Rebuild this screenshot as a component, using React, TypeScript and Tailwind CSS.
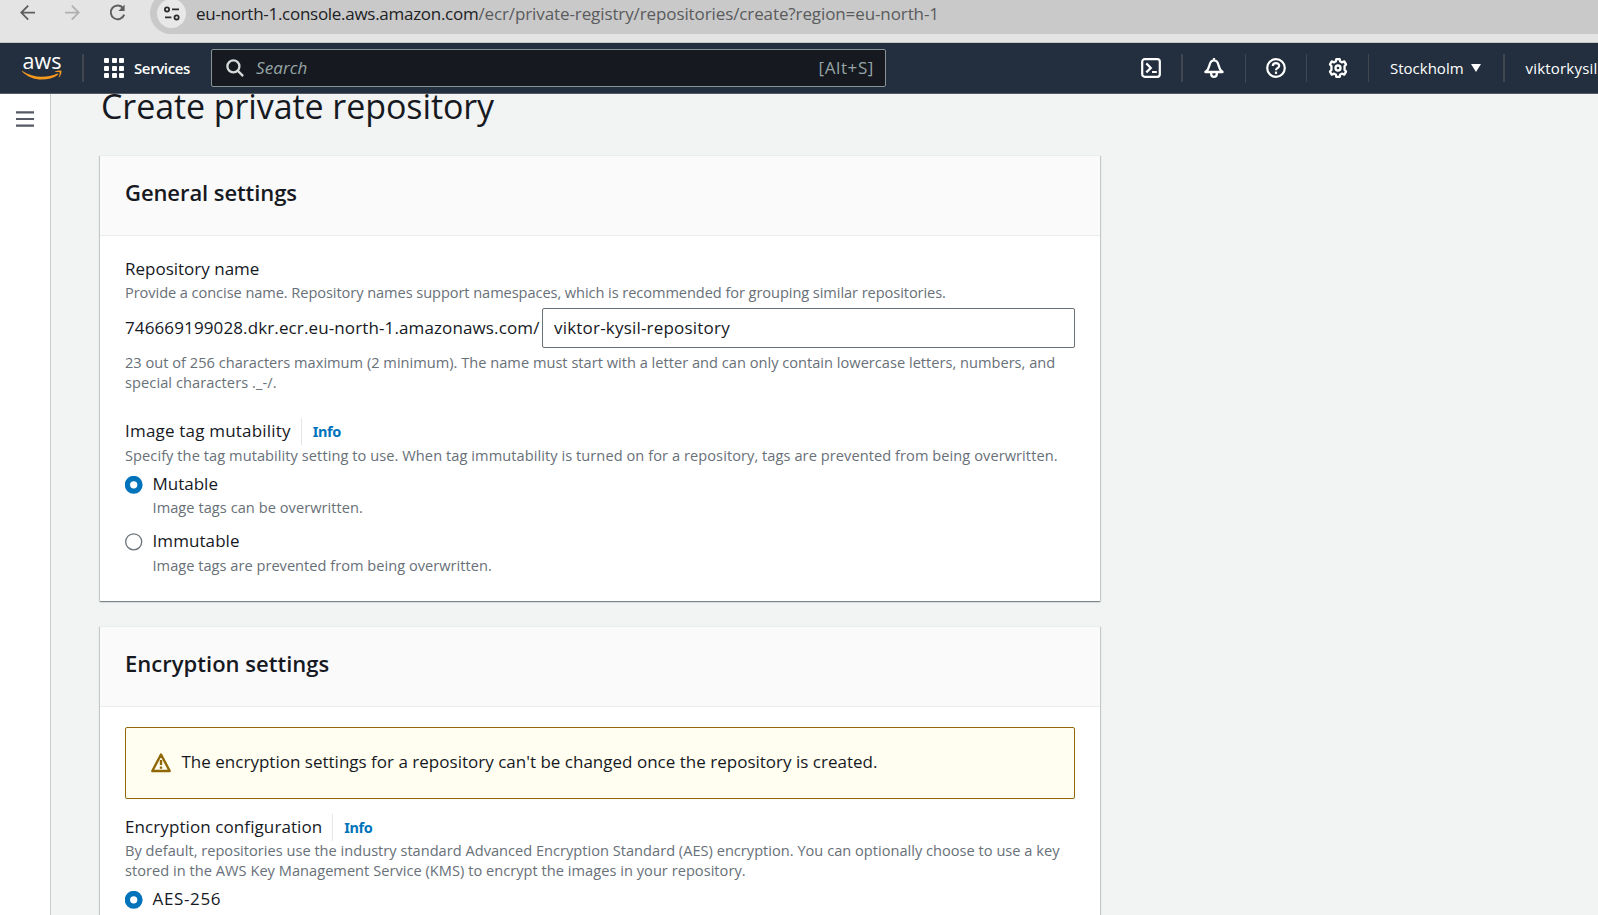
import React from 'react';

const label = 'whitespace-nowrap text-[17px] leading-[26px] text-[#16191f]';
const hint = 'whitespace-nowrap text-[14.6px] leading-[20px] text-[#687078]';

function BrowserBar() {
  return (
    <div className="flex h-[43px] shrink-0 items-start border-b border-[#c3c7c9] bg-[#e4e4e4]">
      <svg className="ml-[20px] mt-[4px] h-[17px] w-[15px]" viewBox="0 0 15 17" fill="none" stroke="#5c5e60" strokeWidth="1.8">
        <path d="M15 8.7H1.6M8.2 1.6 1.3 8.6l6.9 7" />
      </svg>
      <svg className="ml-[30px] mt-[4px] h-[17px] w-[15px]" viewBox="0 0 15 17" fill="none" stroke="#b0b0b0" strokeWidth="1.8">
        <path d="M0 8.7h13.4M6.8 1.6l6.9 7-6.9 7" />
      </svg>
      <svg className="ml-[29px] mt-[4px] h-[17px] w-[18px]" viewBox="0 0 18 17" fill="none" stroke="#5c5e60" strokeWidth="1.9">
        <path d="M14.2 4.2A6.9 6.9 0 1 0 15.2 10.6" />
        <path d="M15.6 0.6v6.4h-6.2z" fill="#5c5e60" stroke="none" />
      </svg>
      <div className="-mt-[8px] ml-[23px] flex h-[42px] flex-1 items-center rounded-l-full bg-[#c9c9c9] pl-[7px]">
        <div className="flex size-[29px] shrink-0 items-center justify-center rounded-full bg-[#e8e8e8]">
          <svg className="h-[15px] w-[16px]" viewBox="0 0 16 15" fill="none" stroke="#2b2d2f" strokeWidth="1.8">
            <circle cx="3" cy="3.4" r="2.1" />
            <path d="M8 3.4h7M1 11.4h6.4" />
            <circle cx="12.6" cy="11.4" r="2.1" />
          </svg>
        </div>
        <div className="ml-[10px] mt-px flex whitespace-nowrap text-[17px] leading-[24px]">
          <span className="tracking-[-0.28px] text-[#202124]">eu-north-1.console.aws.amazon.com</span>
          <span className="tracking-[-0.105px] text-[#5a5b5d]">/ecr/private-registry/repositories/create?region=eu-north-1</span>
        </div>
      </div>
    </div>
  );
}

function AwsLogo() {
  return (
    <div className="flex h-[30px] w-[40px] shrink-0 flex-col items-center">
      <span className="text-[21.5px] font-normal leading-[16px] tracking-[0.1px] text-white">aws</span>
      <svg className="mt-[1px] h-[10px] w-[40px] shrink-0" viewBox="0 0 40 10">
        <path d="M0.3 0.9C6 4.6 13 6.8 20 6.8c5 0 10.600-1.100 15.300-3.200.8-.3 1.300.5.7 1.100C31.800 8 25.500 9.600 19.800 9.600 12.200 9.600 5.400 6.600.2 1.700c-.4-.5-.2-1 .1-.8z" fill="#f7981f" />
        <path d="M33 1.500c2.200-1.200 5.500-1.400 6.300-.7.700.8-.2 4.600-2.100 6.500-.3.300-.6.100-.5-.2.500-1.200 1.400-3.700 1-4.500-.500-.7-3.100-.6-4.400-.5-.4 0-.6-.3-.3-.6z" fill="#f7981f" />
      </svg>
    </div>
  );
}

const iconClass = 'size-[20px] shrink-0';

function TopNav() {
  return (
    <div className="flex h-[51px] shrink-0 items-center overflow-hidden border-b border-[#545b64] bg-[#232f3e] text-white">
      <div className="ml-[22px]"><AwsLogo /></div>
      <div className="ml-[20px] h-[28px] w-[2px] shrink-0 bg-[#414750]" />
      <div className="ml-[20px] grid size-[20px] shrink-0 grid-cols-3 gap-[2.500px]">
        {Array.from({ length: 9 }, (_, i) => (
          <div key={i} className="rounded-[1px] bg-white" />
        ))}
      </div>
      <span className="ml-[10px] w-[56px] shrink-0 text-[15px] font-semibold leading-[24px] tracking-[-0.38px]">Services</span>
      <div className="ml-[21px] flex h-[38px] w-[675px] shrink-0 items-center rounded-[2px] border border-[#879596] bg-[#16191f] pl-[14px] pr-[11px]">
        <svg className="size-[18px]" viewBox="0 0 18 18" fill="none" stroke="#d5dbdb" strokeWidth="2.300">
          <circle cx="7.400" cy="7.400" r="6" />
          <path d="m11.600 11.600 5.500 5.500" />
        </svg>
        <span className="ml-[12px] text-[17px] italic leading-[24px] tracking-[0.100px] text-[#95a5a6]">Search</span>
        <span className="ml-auto text-[17px] leading-[24px] tracking-[0.600px] text-[#95a5a6]">[Alt+S]</span>
      </div>
      <svg className={`${iconClass} ml-[255px]`} viewBox="0 0 20 20" fill="none" stroke="#fff" strokeWidth="2.200">
        <rect x="1.200" y="1.200" width="17.600" height="17.600" rx="2.500" />
        <path d="m5.300 5.400 4.500 4.500-4.500 4.500M11 14h4.800" />
      </svg>
      <div className="ml-[20px] h-[28px] w-[2px] shrink-0 bg-[#414750]" />
      <svg className={`${iconClass} ml-[21px]`} viewBox="0 0 20 20" fill="none" stroke="#fff" strokeWidth="2.300" strokeLinejoin="round">
        <path d="M10 0v2.500M1.400 14h17.200c-2.600-1.900-3.300-3.400-4-6.600C13.900 4 12.300 2.300 10 2.300S6.100 4 5.400 7.400c-.7 3.200-1.400 4.700-4 6.600z" />
        <path d="M7.200 14.600v1.400c0 1.600 1.200 2.800 2.800 2.800s2.800-1.200 2.800-2.800v-1.400" />
      </svg>
      <div className="ml-[21px] h-[29px] w-px shrink-0 bg-[#414750]" />
      <svg className={`${iconClass} ml-[20px]`} viewBox="0 0 20 20" fill="none" stroke="#fff" strokeWidth="2.200">
        <circle cx="10" cy="10" r="8.800" />
        <path d="M6.800 8c0-1.800 1.300-2.900 3.200-2.900s3.200 1 3.200 2.600c0 1.400-.9 1.900-1.800 2.500-.9.600-1.400 1-1.400 2.100" />
        <path d="M10 13.600v2.300" />
      </svg>
      <div className="ml-[20px] h-[28px] w-px shrink-0 bg-[#414750]" />
      <svg className={`${iconClass} ml-[21px]`} viewBox="0 0 20 20" fill="none" stroke="#fff" strokeWidth="2.300" strokeLinejoin="round">
        <path d="M8.300 1.200h3.400l.5 2.200q.9.300 1.700.9l2.400-.9 1.700 3-1.500 1.800q.2 1.800 0 3.600l1.500 1.800-1.700 3-2.400-.9q-.8.600-1.700.9l-.5 2.200H8.300l-.5-2.200q-.9-.3-1.700-.9l-2.400.9-1.700-3 1.500-1.800q-.2-1.800 0-3.600L2 6.400l1.700-3 2.400.9q.8-.6 1.700-.9z" />
        <circle cx="10" cy="10" r="2.500" />
      </svg>
      <div className="ml-[20px] h-[28px] w-px shrink-0 bg-[#414750]" />
      <span className="ml-[21px] w-[74px] shrink-0 text-[15px] font-medium leading-[24px]">Stockholm</span>
      <svg className="ml-[7px] h-[8px] w-[10px] shrink-0" viewBox="0 0 10 8"><path d="M0 0h10L5 8z" fill="#fff" /></svg>
      <div className="ml-[22px] h-[28px] w-[2px] shrink-0 bg-[#414750]" />
      <span className="ml-[20.500px] shrink-0 text-[15px] font-medium leading-[24px] tracking-[0.200px]">viktorkysil</span>
    </div>
  );
}

function Card({ title, titleClass, children }: { title: string; titleClass: string; children: React.ReactNode }) {
  return (
    <section className="w-[1000px] border-t border-[#eaeded] bg-white shadow-[0_1px_1px_0_rgba(0,28,36,0.3),1px_1px_1px_0_rgba(0,28,36,0.15),-1px_1px_1px_0_rgba(0,28,36,0.15)]">
      <header className="h-[80px] border-b border-[#eaeded] bg-[#fafafa] px-[25px] pt-[20px]">
        <h2 className={`whitespace-nowrap text-[22px] font-semibold leading-[32px] text-[#16191f] ${titleClass}`}>{title}</h2>
      </header>
      <div className="px-[25px] pb-[26px] pt-[20px]">{children}</div>
    </section>
  );
}

function LabelWithInfo({ text, textClass }: { text: string; textClass: string }) {
  return (
    <div className="flex h-[24px] items-start">
      <span className={`${label} ${textClass}`}>{text}</span>
      <div className="ml-[10px] h-[27px] w-px bg-[#e3e7e7]" />
      <a className="ml-[11px] font-['Noto_Sans'] text-[14.500px] font-bold leading-[26px] tracking-[-0.400px] text-[#0073bb]">Info</a>
    </div>
  );
}

function Radio({ text, textClass, on }: { text: string; textClass?: string; on?: boolean }) {
  return (
    <div className="flex h-[24px] items-start">
      <svg className="mt-[5px] size-[18px]" viewBox="0 0 18 18">
        {on ? (
          <circle cx="8.700" cy="8.800" r="6.300" fill="#fff" stroke="#0073bb" strokeWidth="5.300" />
        ) : (
          <circle cx="8.700" cy="8.800" r="8" fill="#fff" stroke="#687078" strokeWidth="1.300" />
        )}
      </svg>
      <span className={`${label} ml-[9.500px] ${textClass ?? ''}`}>{text}</span>
    </div>
  );
}

export default function App() {
  return (
    <div className="flex h-[915px] w-[1598px] flex-col overflow-hidden bg-[#f2f3f3] font-['Open_Sans','Noto_Sans',sans-serif]">
      <BrowserBar />
      <TopNav />
      <div className="flex min-h-0 flex-1">
        <aside className="w-[51px] shrink-0 border-r border-[#c6cdcd] bg-white pl-[16px] pt-[17px]">
          <svg className="h-[16px] w-[18px]" viewBox="0 0 18 16" stroke="#545b64" strokeWidth="2.200">
            <path d="M0 1.400h18M0 8h18M0 14.600h18" />
          </svg>
        </aside>
        <main className="flex min-w-0 flex-1 flex-col items-start overflow-hidden pl-[49px]">
          <h1 className="-mt-[10px] ml-px whitespace-nowrap text-[34px] leading-[44px] tracking-[-0.080px] text-[#16191f]">Create private repository</h1>
          <div className="mt-[27px]">
            <Card title="General settings" titleClass="tracking-[-0.080px]">
              <div className={`${label} h-[24px]`}>Repository name</div>
              <div className={`${hint} mt-[2px] tracking-[-0.070px]`}>
                Provide a concise name. Repository names support namespaces, which is recommended for grouping similar repositories.
              </div>
              <div className="mt-[6px] flex h-[40px] items-center">
                <span className={`${label} w-[417px] shrink-0 tracking-[0.121px]`}>746669199028.dkr.ecr.eu-north-1.amazonaws.com/</span>
                <div className="flex h-[40px] flex-1 items-center rounded-[2px] border border-[#687078] bg-white pl-[11px]">
                  <span className={`${label} tracking-[0.200px]`}>viktor-kysil-repository</span>
                </div>
              </div>
              <div className={`${hint} mt-[4px]`}>
                <div className="tracking-[0.014px]">23 out of 256 characters maximum (2 minimum). The name must start with a letter and can only contain lowercase letters, numbers, and</div>
                <div className="tracking-[0.080px]">special characters ._-/.</div>
              </div>
              <div className="mt-[26px]">
                <LabelWithInfo text="Image tag mutability" textClass="tracking-[0.200px]" />
              </div>
              <div className={`${hint} mt-[3px] tracking-[0.067px]`}>
                Specify the tag mutability setting to use. When tag immutability is turned on for a repository, tags are prevented from being overwritten.
              </div>
              <div className="mt-[6px]"><Radio on text="Mutable" /></div>
              <div className={`${hint} ml-[27.500px] mt-[2px] tracking-[0.050px]`}>Image tags can be overwritten.</div>
              <div className="mt-[11px]"><Radio text="Immutable" textClass="tracking-[0.080px]" /></div>
              <div className={`${hint} ml-[27.500px] mt-[3px] tracking-[0.020px]`}>Image tags are prevented from being overwritten.</div>
            </Card>
          </div>
          <div className="mt-[25px]">
            <Card title="Encryption settings" titleClass="tracking-[0.020px]">
              <div className="flex h-[72px] items-center rounded-[2px] border border-[#906806] bg-[#fffef0] pl-[25px]">
                <svg className="size-[20px] shrink-0" viewBox="0 0 20 20" fill="none" stroke="#906806" strokeWidth="2.400" strokeLinejoin="round">
                  <path d="M10 1.500 18.700 18H1.300z" />
                  <path d="M10 7v5M10 13.400v2.300" />
                </svg>
                <span className={`${label} -mt-[2px] ml-[10.500px] tracking-[0.010px]`}>The encryption settings for a repository can't be changed once the repository is created.</span>
              </div>
              <div className="mt-[15px]">
                <LabelWithInfo text="Encryption configuration" textClass="tracking-[0.090px]" />
              </div>
              <div className={`${hint} mt-[2px]`}>
                <div className="tracking-[0.012px]">By default, repositories use the industry standard Advanced Encryption Standard (AES) encryption. You can optionally choose to use a key</div>
                <div className="tracking-[0.030px]">stored in the AWS Key Management Service (KMS) to encrypt the images in your repository.</div>
              </div>
              <div className="mt-[6px]"><Radio on text="AES-256" textClass="tracking-[0.650px]" /></div>
            </Card>
          </div>
        </main>
      </div>
    </div>
  );
}
